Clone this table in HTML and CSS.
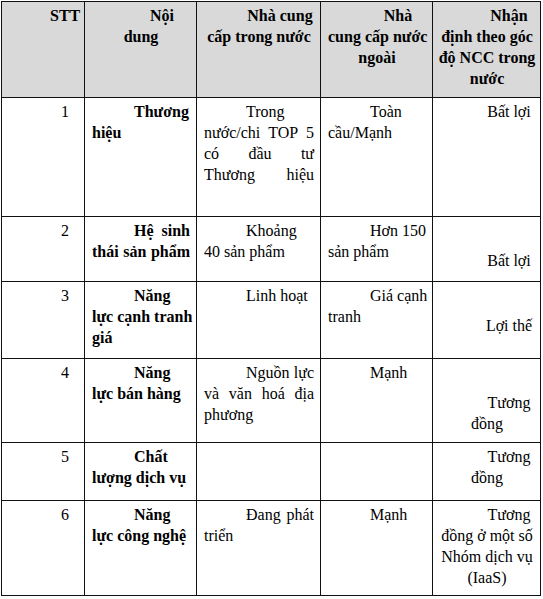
FILE: index.html
```html
<!DOCTYPE html>
<html lang="vi">
<head>
<meta charset="utf-8">
<title>So sánh nhà cung cấp</title>
<link rel="stylesheet" href="styles.css">
</head>
<body>
<table class="grid">
  <colgroup>
    <col class="c1"><col class="c2"><col class="c3"><col class="c4"><col class="c5">
  </colgroup>
  <thead>
    <tr class="rh">
      <th class="cn"><span class="l i">STT</span></th>
      <th class="cw"><span class="l i">Nội</span><span class="l">dung</span></th>
      <th class="cw"><span class="l i">Nhà cung</span><span class="l">cấp trong nước</span></th>
      <th class="cw"><span class="l i">Nhà</span><span class="l">cung cấp nước</span><span class="l">ngoài</span></th>
      <th class="cr"><span class="l i">Nhận</span><span class="l">định theo góc</span><span class="l">độ NCC trong</span><span class="l">nước</span></th>
    </tr>
  </thead>
  <tbody>
    <tr class="r1">
      <td class="cn"><span class="l i">1</span></td>
      <td class="cw b"><span class="l i">Thương</span><span class="l">hiệu</span></td>
      <td class="cw"><span class="l i">Trong</span><span class="l j">nước/chi TOP 5</span><span class="l j">có đầu tư</span><span class="l j">Thương hiệu</span></td>
      <td class="cw"><span class="l i">Toàn</span><span class="l">cầu/Mạnh</span></td>
      <td class="cr"><span class="l i">Bất lợi</span></td>
    </tr>
    <tr class="r2">
      <td class="cn"><span class="l i">2</span></td>
      <td class="cw b"><span class="l i j">Hệ sinh</span><span class="l j">thái sản phẩm</span></td>
      <td class="cw"><span class="l i">Khoảng</span><span class="l">40 sản phẩm</span></td>
      <td class="cw"><span class="l i j">Hơn 150</span><span class="l">sản phẩm</span></td>
      <td class="cr drop"><span class="l i">Bất lợi</span></td>
    </tr>
    <tr class="r3">
      <td class="cn"><span class="l i">3</span></td>
      <td class="cw b"><span class="l i">Năng</span><span class="l j">lực cạnh tranh</span><span class="l">giá</span></td>
      <td class="cw"><span class="l i">Linh hoạt</span></td>
      <td class="cw"><span class="l i j">Giá cạnh</span><span class="l">tranh</span></td>
      <td class="cr drop"><span class="l i">Lợi thế</span></td>
    </tr>
    <tr class="r4">
      <td class="cn"><span class="l i">4</span></td>
      <td class="cw b"><span class="l i">Năng</span><span class="l">lực bán hàng</span></td>
      <td class="cw"><span class="l i j">Nguồn lực</span><span class="l j">và văn hoá địa</span><span class="l">phương</span></td>
      <td class="cw"><span class="l i">Mạnh</span></td>
      <td class="cr drop"><span class="l i">Tương</span><span class="l">đồng</span></td>
    </tr>
    <tr class="r5">
      <td class="cn"><span class="l i">5</span></td>
      <td class="cw b"><span class="l i">Chất</span><span class="l">lượng dịch vụ</span></td>
      <td class="cw"></td>
      <td class="cw"></td>
      <td class="cr"><span class="l i">Tương</span><span class="l">đồng</span></td>
    </tr>
    <tr class="r6">
      <td class="cn"><span class="l i">6</span></td>
      <td class="cw b"><span class="l i">Năng</span><span class="l">lực công nghệ</span></td>
      <td class="cw"><span class="l i j">Đang phát</span><span class="l">triển</span></td>
      <td class="cw"><span class="l i">Mạnh</span></td>
      <td class="cr"><span class="l i">Tương</span><span class="l">đồng ở một số</span><span class="l">Nhóm dịch vụ</span><span class="l">(IaaS)</span></td>
    </tr>
  </tbody>
</table>
</body>
</html>
```
FILE: styles.css
```css
body {
  margin: 0;
  background: #ffffff;
  font-family: "Liberation Serif", "Times New Roman", serif;
  font-size: 16px;
  line-height: 21px;
  color: #000000;
}

.grid {
  border-collapse: collapse;
  table-layout: fixed;
  width: 540px;
  margin: 1px 0 0 1px;
}

.c1 { width: 83px; }
.c2 { width: 112px; }
.c3 { width: 124px; }
.c4 { width: 112px; }
.c5 { width: 108px; }

.rh { height: 96px; }
.r1 { height: 119px; }
.r2 { height: 65px; }
.r3 { height: 77px; }
.r4 { height: 84px; }
.r5 { height: 58px; }
.r6 { height: 95px; }

.grid th,
.grid td {
  border: 1px solid #111111;
  vertical-align: top;
  padding: 3px 6px 0 7px;
  text-align: left;
  font-weight: normal;
}

.grid thead th {
  background: #d9d9d9;
  font-weight: bold;
  text-align: center;
}

.grid .cn {
  padding-left: 4px;
  padding-right: 4px;
  text-align: center;
}

.grid .cr {
  padding-left: 5px;
  padding-right: 4px;
  text-align: center;
}

.grid .b {
  font-weight: bold;
}

.grid .drop {
  padding-top: 33px;
}

.l {
  display: block;
  white-space: nowrap;
}

.i {
  padding-left: 44px;
}

.cw .i {
  padding-left: 42px;
}

.j {
  text-align: justify;
  text-align-last: justify;
}
```
